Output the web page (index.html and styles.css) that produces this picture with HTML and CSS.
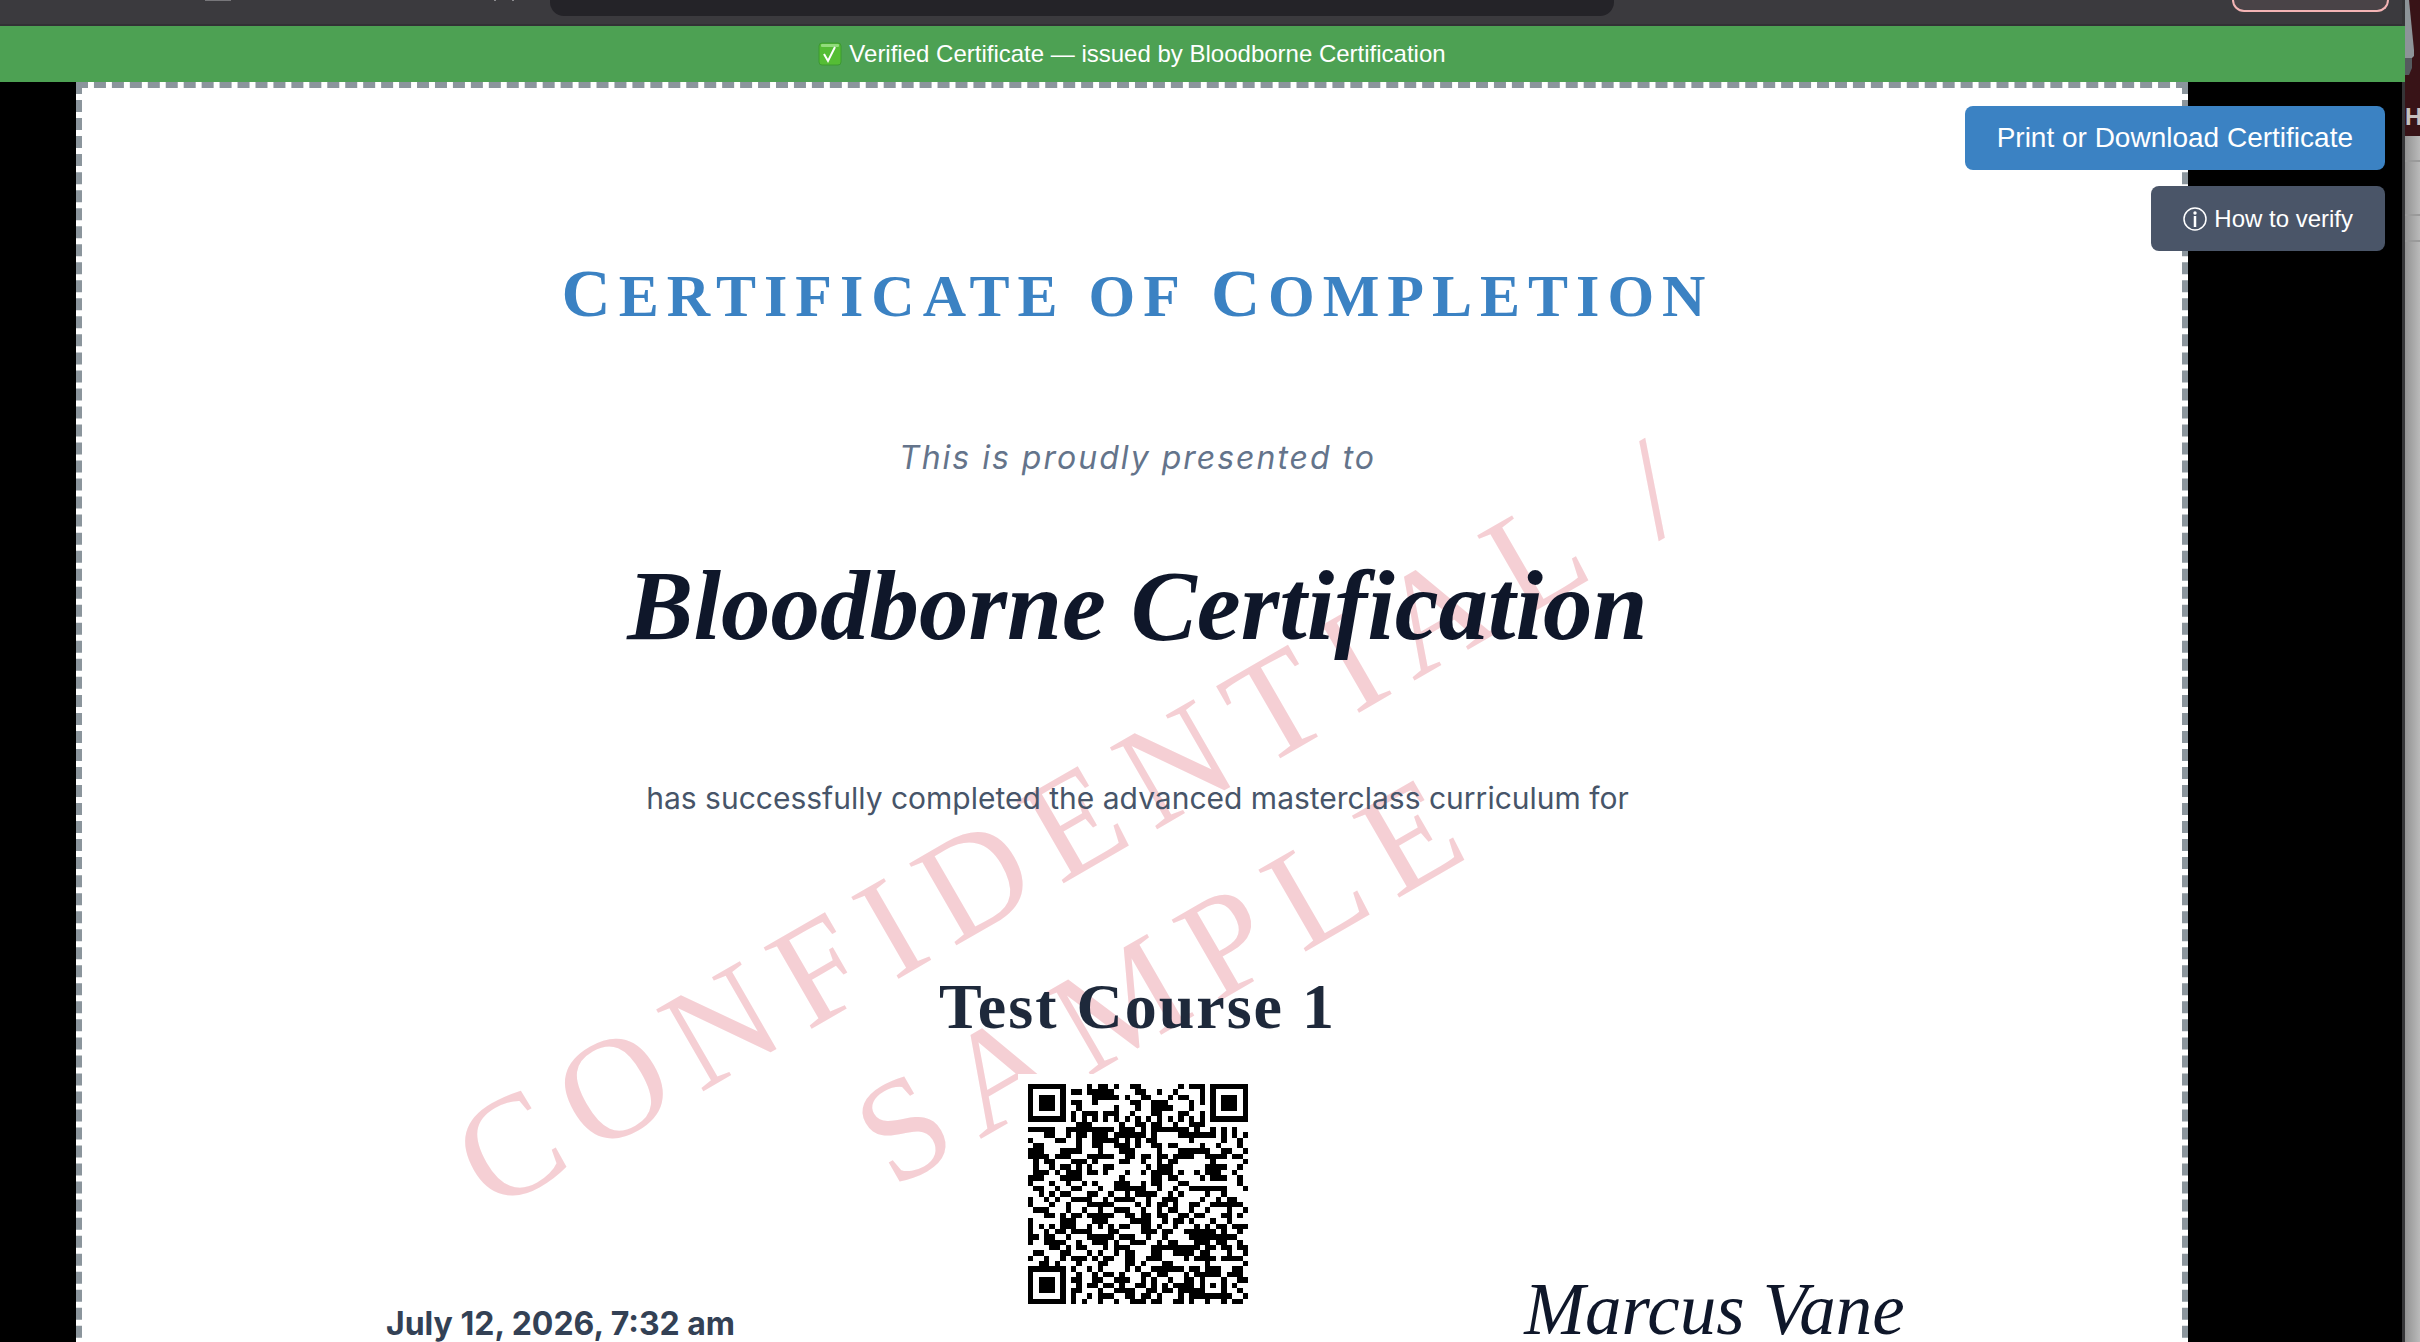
FILE: index.html
```
<!DOCTYPE html>
<html lang="en">
<head>
<meta charset="utf-8">
<title>Verified Certificate</title>
<link rel="stylesheet" href="styles.css">
</head>
<body>
<div class="window">
  <div class="toolbar">
    <span class="tab-mark"></span>
    <span class="nav-mark"></span>
    <div class="address"></div>
    <div class="profile"></div>
  </div>
  <div class="banner">
    <svg class="check" viewBox="0 0 24 24" aria-hidden="true">
      <rect x="1" y="1" width="22" height="22" rx="3" fill="#55bd35" stroke="#3d9a31"/>
      <rect x="3" y="2" width="18" height="3" rx="1" fill="#92dc7c"/>
      <path d="M6 12l4 7 7-14" fill="none" stroke="#fff" stroke-width="2"/>
    </svg>
    <span>Verified Certificate — issued by Bloodborne Certification</span>
  </div>
  <main class="stage">
    <article class="certificate">
      <div class="watermark">CONFIDENTIAL / SAMPLE</div>
      <h1 class="title"><span class="word">Certificate</span> <span class="word">of</span> <span class="word">Completion</span></h1>
      <p class="presented">This is proudly presented to</p>
      <p class="recipient">Bloodborne Certification</p>
      <p class="statement">has successfully completed the advanced masterclass curriculum for</p>
      <h2 class="course">Test Course 1</h2>
      <div class="footer">
        <time class="date">July 12, 2026, 7:32 am</time>
        <svg class="qr" id="qr" viewBox="0 0 41 41" role="img" aria-label="QR code" shape-rendering="crispEdges"><path id="modules" fill="#000"/></svg>
        <p class="signature">Marcus Vane</p>
      </div>
    </article>
    <div class="actions">
      <button class="btn print" type="button">Print or Download Certificate</button>
      <button class="btn verify" type="button"><svg class="info" viewBox="0 0 24 24" aria-hidden="true"><circle cx="12" cy="12" r="11" fill="none" stroke="#fff" stroke-width="1.5"/><circle cx="12" cy="6" r="1.7" fill="#fff"/><path d="M12 9v11" stroke="#fff" stroke-width="2.5"/></svg>How to verify</button>
    </div>
  </main>
</div>
<aside class="behind">
  <div class="photo">
    <svg class="metal" viewBox="0 0 15 78" aria-hidden="true"><path d="M0 0h4l5 50v6l-3 3H0z" fill="#8d9498"/><path d="M0 58h7v10l-3 7H0z" fill="#555a5e"/></svg>
    <span class="letter">H</span>
  </div>
  <div class="panel"><div class="line"></div><div class="line gap"></div><div class="line low"></div></div>
</aside>
<script src="qr.js"></script>
</body>
</html>
```
FILE: styles.css
```
* { box-sizing: border-box; }
body {
  margin: 0;
  height: 100vh;
  display: flex;
  overflow: hidden;
  background: #000;
  font-family: "Liberation Sans", Arial, sans-serif;
}
.window {
  flex: 1;
  min-width: 0;
  display: flex;
  flex-direction: column;
  border-right: 3px solid #353537;
}
.toolbar {
  flex: none;
  display: flex;
  height: 26px;
  padding: 0 13px 0 205px;
  background: #3b3a3e;
  border-bottom: 2px solid #323135;
}
.tab-mark { width: 26px; height: 1px; background: #77767a; }
.nav-mark { width: 20px; height: 1px; margin-left: 263px; border: solid #8b8a8e; border-width: 0 2px; }
.address { flex: 1; height: 16px; margin: 0 618px 0 36px; background: #242328; border-radius: 0 0 14px 14px; }
.profile { width: 157px; height: 12px; background: #494347; border: 2px solid #f4b4b5; border-top: 0; border-radius: 0 0 14px 14px; }
.banner {
  flex: none;
  display: flex;
  align-items: center;
  justify-content: center;
  gap: 7px;
  height: 56px;
  padding-right: 141px;
  margin-right: -3px;
  background: #4da153;
  color: #fff;
  font-size: 24px;
}
.check { width: 24px; height: 24px; }
.stage { position: relative; flex: 1; min-height: 0; padding: 0 214px 0 76px; }
.certificate {
  position: relative;
  z-index: 0;
  min-height: 1400px;
  padding: 165px 0 0 11px;
  background: #fff;
  border: 6px dashed #8b959c;
  text-align: center;
}
.certificate h1, .certificate h2, .certificate p { margin: 0; }
.watermark {
  position: absolute;
  z-index: -1;
  top: 630px;
  left: 50%;
  width: 1500px;
  margin-left: -760px;
  transform: rotate(-30deg);
  color: #f5cfd4;
  font: 144px/180px "Liberation Serif", serif;
  letter-spacing: 20px;
}
.certificate .title {
  color: #3b82c3;
  font: bold 60px/80px "Liberation Serif", serif;
  letter-spacing: 8px;
  text-transform: uppercase;
}
.word { display: inline-block; }
.word:first-child::first-letter, .word:last-child::first-letter { font-size: 68px; }
.certificate .presented { margin-top: 102px; color: #64748b; font: italic 32px/40px Inter, sans-serif; letter-spacing: 2px; }
.certificate .recipient { margin-top: 68px; color: #0f172a; font: italic bold 99px/120px "Liberation Serif", serif; }
.certificate .statement { margin-top: 112px; color: #475569; font: 30px/40px Inter, sans-serif; }
.certificate .course { margin-top: 153px; color: #1e293b; font: bold 64px/72px "Liberation Serif", serif; letter-spacing: 2px; }
.footer {
  display: grid;
  grid-template-columns: 460px 240px 460px;
  justify-content: space-between;
  width: 1614px;
  max-width: 100%;
  margin: 31px auto 0;
}
.date { margin-top: 230px; color: #334155; font: bold 32px/40px Inter, sans-serif; }
.qr { width: 240px; height: 240px; padding: 10px; background: #fff; }
.certificate .signature { margin-top: 196px; color: #0f172a; font: italic 73px/80px "Liberation Serif", serif; }
.actions {
  position: absolute;
  z-index: 1;
  top: 24px;
  right: 17px;
  display: flex;
  flex-direction: column;
  align-items: flex-end;
  gap: 16px;
}
.btn {
  display: flex;
  align-items: center;
  height: 64px;
  padding: 0 32px;
  border: 0;
  border-radius: 8px;
  color: #fff;
  font: 24px "Liberation Sans", Arial, sans-serif;
}
.print { background: #3b82c3; font-size: 28px; }
.verify { gap: 7px; height: 65px; background: #4a5568; }
.info { width: 24px; height: 24px; }
.behind { flex: none; width: 15px; display: flex; flex-direction: column; }
.photo { height: 136px; background: #381317; overflow: hidden; }
.metal { display: block; width: 15px; height: 78px; }
.letter { display: block; margin-top: 25px; color: #c5c0bf; font: bold 24px/28px "Liberation Sans", sans-serif; }
.panel { flex: 1; padding-top: 24px; background: linear-gradient(90deg, #929292, #bababa); }
.line { height: 2px; background: #9a9a9a; }
.gap { margin-top: 52px; }
.low { margin-top: 24px; }
```
FILE: qr.js
```
const rows = [
  "11111110000101101001100000001011101111111",
  "10000010110111110000110010010000101000001",
  "10111010000011111010011000101100101011101",
  "10111010110010000001100111000010101011101",
  "10111010010000001000100111100010001011101",
  "10000010101110111001000110001100101000001",
  "11111110101010101010101010101010101111111",
  "00000000011100000100110110010011100000000",
  "11111001111111110111010111111101001010100",
  "00011001011011101111110100001111111010101",
  "10000110010011111010101100000010000010010",
  "01100000010011001110100110110000100100010",
  "11100011110001000111000010001111110011001",
  "11110111000111110011011011011110011110110",
  "01011000111010000110010010110000001000001",
  "01001011010100110000001011100000011110010",
  "01110101110110100010010111101001011100100",
  "11100011110000000100000110110000101110010",
  "10001001001010001110010110001100000000010",
  "01100100110001001111110010010011111110001",
  "00101011000110010010111100101000010010000",
  "10010100111100101111001001110000100101100",
  "10001001000111110000101011010011001111110",
  "01110001001001001110010010110010010001001",
  "00011010110111110011011011001101100011010",
  "10000011100011100001111001011010001001000",
  "10101011100101010110011010010001010110111",
  "10010110111100011000011101100111111010010",
  "11011001000111110111001001000011111111100",
  "10011110010011101001110010110001110110010",
  "00001101011000101110000111111111011011011",
  "01100011000101001011000110011110110001001",
  "10010010111010110011001110000101111011110",
  "00110100010001100011010001100000010000001",
  "10000001100101000010100111111011011100110",
  "01111000010010110100011011000101111101110",
  "00000000110011001110010100100110100010011",
  "11111110010110110100110101011110101010100",
  "10000010110001001111001101101111100010010",
  "10111010100101110011011010001011111111001",
  "10111010101001001001110110011010010010110",
];

// The lower-left finder fills the last seven rows.
const finder = ["1111111", "1000001", "1011101", "1011101", "1011101", "1000001", "1111111"];
const path = rows.map((row, y) => {
  const line = y >= 34 ? finder[y - 34] + "0" + row.slice(8) : row;
  return [...line].map((bit, x) => (bit === "1" ? `M${x} ${y}h1v1h-1z` : "")).join("");
}).join("");
document.getElementById("modules").setAttribute("d", path);
```
